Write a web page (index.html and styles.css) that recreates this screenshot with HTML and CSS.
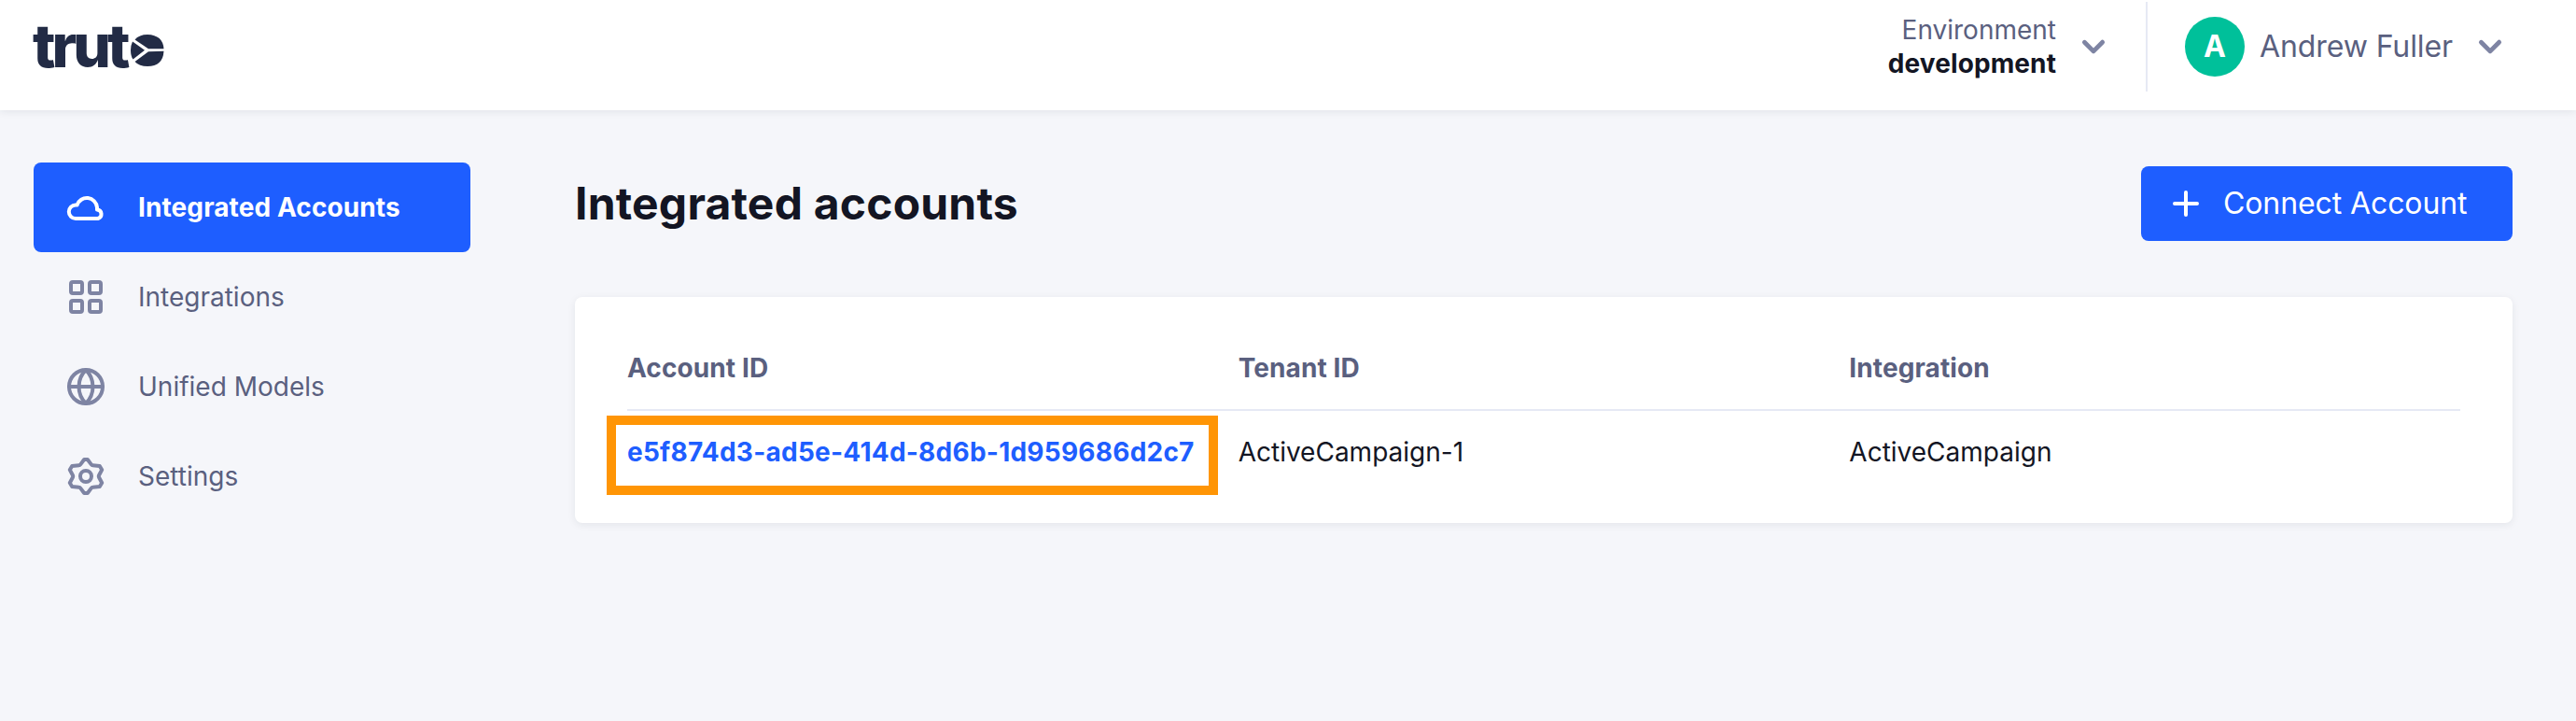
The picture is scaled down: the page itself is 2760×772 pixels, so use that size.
FILE: index.html
```
<!DOCTYPE html>
<html lang="en">
<head>
  <meta charset="UTF-8" />
  <meta name="viewport" content="width=device-width, initial-scale=1.0"/>
  <title>Truto - Integrated accounts</title>
  <link rel="stylesheet" href="styles.css">
</head>
<body>
  <header class="topbar">
    <a class="logo" href="#">
      <span class="logo-text">trut</span>
      <svg class="logo-mark" viewBox="0 0 36 36">
        <path d="M4.500 6.500Q9 1 18 1 34.500 1.500 35.500 16.300L19 16.300z"/>
        <path d="M2 8.500L15 17.800 2.500 27.500Q0 24 0 18 0 12.500 2 8.500z"/>
        <path d="M19 19.300L35.500 18.800Q34.500 35 18 35 9 35 4.500 30z"/>
      </svg>
    </a>
    <div class="topbar-right">
      <button class="env">
        <span class="env-text">
          <span class="env-label">Environment</span>
          <span class="env-name">development</span>
        </span>
        <svg class="chevron" viewBox="0 0 20 20"><path d="M5.293 7.293a1 1 0 011.414 0L10 10.586l3.293-3.293a1 1 0 111.414 1.414l-4 4a1 1 0 01-1.414 0l-4-4a1 1 0 010-1.414z"/></svg>
      </button>
      <button class="user">
        <span class="avatar">A</span>
        <span class="user-name">Andrew Fuller</span>
        <svg class="chevron" viewBox="0 0 20 20"><path d="M5.293 7.293a1 1 0 011.414 0L10 10.586l3.293-3.293a1 1 0 111.414 1.414l-4 4a1 1 0 01-1.414 0l-4-4a1 1 0 010-1.414z"/></svg>
      </button>
    </div>
  </header>

  <div class="layout">
    <nav class="sidebar">
      <a class="nav-item active" href="#">
        <svg class="icon" viewBox="0 0 24 24"><path d="M6.500 18a3.600 3.600 0 0 1 0-7.200h.8a5.500 5.500 0 0 1 10.700 1.200v1.200a2.450 2.450 0 0 1 .5 4.800z"/></svg>
        <span>Integrated Accounts</span>
      </a>
      <a class="nav-item" href="#">
        <svg class="icon" viewBox="0 0 24 24">
          <rect x="4" y="4" width="6" height="6" rx="1"/>
          <rect x="14" y="4" width="6" height="6" rx="1"/>
          <rect x="4" y="14" width="6" height="6" rx="1"/>
          <rect x="14" y="14" width="6" height="6" rx="1"/>
        </svg>
        <span>Integrations</span>
      </a>
      <a class="nav-item" href="#">
        <svg class="icon" viewBox="0 0 24 24">
          <circle cx="12" cy="12" r="9"/>
          <path d="M3 12h18M12 3c-5 5-5 13 0 18M12 3c5 5 5 13 0 18"/>
        </svg>
        <span>Unified Models</span>
      </a>
      <a class="nav-item" href="#">
        <svg class="icon" viewBox="0 0 24 24">
          <path d="M11.100 3h1.800l2 2.700q.3.400.8.400l3.700.4 1.200 2-1.600 3q-.2.500 0 1l1.600 3-1.200 2-3.700.4q-.5 0-.8.400l-2 2.700h-1.800l-2-2.700q-.3-.4-.8-.4l-3.700-.4-1.200-2 1.600-3q.2-.5 0-1L3.400 8.500l1.200-2 3.700-.4q.5 0 .8-.4z"/>
          <circle cx="12" cy="12" r="3"/>
        </svg>
        <span>Settings</span>
      </a>
    </nav>

    <main class="content">
      <div class="page-head">
        <h1>Integrated accounts</h1>
        <button class="connect">
          <svg class="icon" viewBox="0 0 24 24"><path d="M12 6v12M6 12h12"/></svg>
          <span>Connect Account</span>
        </button>
      </div>

      <div class="card">
        <div class="row head">
          <div>Account ID</div>
          <div>Tenant ID</div>
          <div>Integration</div>
        </div>
        <div class="row">
          <div class="highlighted"><a href="#">e5f874d3-ad5e-414d-8d6b-1d959686d2c7</a></div>
          <div>ActiveCampaign-1</div>
          <div>ActiveCampaign</div>
        </div>
      </div>
    </main>
  </div>
</body>
</html>
```
FILE: styles.css
```
* {
  box-sizing: border-box;
}

body {
  margin: 0;
  min-height: 100vh;
  background: #f5f6fa;
  color: #131523;
  font-family: Inter, sans-serif;
  font-size: 28px;
  line-height: 40px;
}

a {
  text-decoration: none;
}

button {
  border: none;
  padding: 0;
  background: none;
  font: inherit;
  color: inherit;
  cursor: pointer;
}

.topbar {
  display: flex;
  justify-content: space-between;
  align-items: center;
  height: 118px;
  padding: 0 68px 18px 36px;
  background: #fff;
  box-shadow: 0 2px 8px rgba(21, 34, 50, 0.08);
}

.logo {
  display: flex;
  align-items: flex-end;
  height: 44px;
  color: #222b45;
}

.logo-text {
  width: 104px;
  margin-left: -1px;
  margin-right: 1px;
  font-size: 64px;
  font-weight: 800;
  line-height: 46px;
  letter-spacing: -4px;
}

.logo-mark {
  width: 36px;
  height: 36px;
  fill: #222b45;
}

.topbar-right,
.env,
.user {
  display: flex;
  align-items: center;
}

.env {
  height: 96px;
  gap: 16px;
  padding-right: 32px;
  border-right: 2px solid #e6e9f4;
}

.env-text {
  display: flex;
  flex-direction: column;
  line-height: 36px;
  text-align: right;
}

.env-label {
  color: #5a607f;
}

.env-name {
  font-weight: 700;
  letter-spacing: 0.1px;
}

.chevron {
  width: 48px;
  height: 48px;
  fill: #7e84a3;
}

.user {
  gap: 16px;
  padding-left: 40px;
  color: #5a607f;
  font-size: 32px;
}

.user-name {
  letter-spacing: -0.1px;
}

.avatar {
  width: 64px;
  height: 64px;
  border-radius: 50%;
  background: #00c09a;
  color: #fff;
  font-weight: 700;
  line-height: 64px;
  text-align: center;
}

.layout {
  display: flex;
  gap: 112px;
  padding: 56px 68px 0 36px;
}

.sidebar {
  width: 468px;
}

.nav-item {
  display: flex;
  align-items: center;
  gap: 32px;
  height: 96px;
  padding: 0 32px;
  border-radius: 8px;
  color: #5a607f;
}

.icon {
  width: 48px;
  height: 48px;
  fill: none;
  stroke: #7e84a3;
  stroke-width: 2;
  stroke-linecap: round;
  stroke-linejoin: round;
}

.nav-item.active {
  background: #1e5eff;
  color: #fff;
  font-weight: 700;
  letter-spacing: 0.1px;
}

.active .icon,
.connect .icon {
  stroke: #fff;
}

.content {
  flex: 1;
  padding-top: 4px;
}

.page-head {
  display: flex;
  justify-content: space-between;
  align-items: center;
  margin-bottom: 60px;
}

h1 {
  margin: 0;
  font-size: 48px;
  font-weight: 700;
  line-height: 64px;
  letter-spacing: 0.2px;
}

.connect {
  display: flex;
  align-items: center;
  gap: 16px;
  width: 398px;
  height: 80px;
  padding-left: 24px;
  border-radius: 8px;
  background: #1e5eff;
  color: #fff;
  font-size: 32px;
  letter-spacing: -0.1px;
}

.card {
  padding: 56px;
  border-radius: 8px;
  background: #fff;
  box-shadow: 0 2px 8px rgba(21, 34, 50, 0.08);
}

.row {
  display: grid;
  grid-template-columns: repeat(3, 1fr);
  padding-top: 24px;
}

.row.head {
  padding: 0 0 24px;
  border-bottom: 2px solid #e6e9f4;
  color: #5a607f;
  font-weight: 700;
  letter-spacing: 0.1px;
}

.row a {
  color: #1e5eff;
  font-weight: 700;
  letter-spacing: 0.24px;
}

.highlighted {
  position: relative;
}

/* orange frame around the account link */
.highlighted::after {
  content: '';
  position: absolute;
  box-sizing: border-box;
  top: -19px;
  left: -22px;
  width: 655px;
  height: 85px;
  border: 10px solid #ff9505;
  pointer-events: none;
}
```
